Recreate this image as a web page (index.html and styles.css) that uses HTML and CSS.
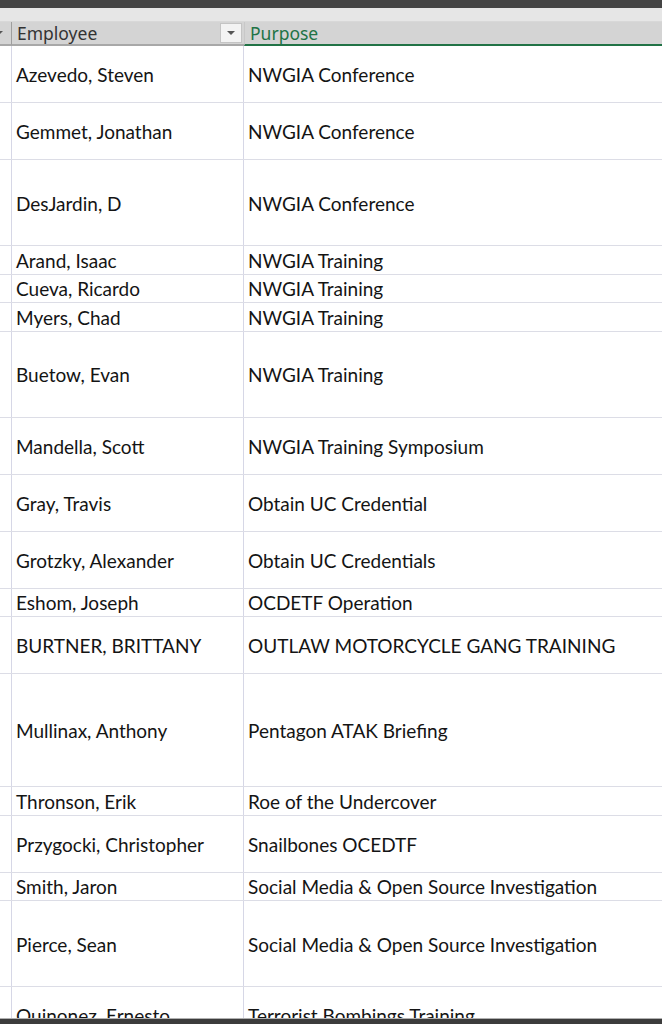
FILE: index.html
```html
<!DOCTYPE html>
<html>
<head>
<meta charset="utf-8">
<link rel="stylesheet" href="styles.css">
</head>
<body>
<div class="page">
  <div class="topbar"></div>
  <div class="strip"></div>
  <div class="header">
    <div class="hcell hcell-stub"><span class="tri tri-stub"></span></div>
    <div class="hcell hcell-emp">
      <span class="htext">Employee</span>
      <span class="dd"><span class="tri"></span></span>
    </div>
    <div class="hcell hcell-purpose"><span class="htext">Purpose</span></div>
  </div>
  <div class="table">
    <div class="row h2"><div class="stub"></div><div class="cell emp">Azevedo, Steven</div><div class="cell">NWGIA Conference</div></div>
    <div class="row h2"><div class="stub"></div><div class="cell emp">Gemmet, Jonathan</div><div class="cell">NWGIA Conference</div></div>
    <div class="row h3"><div class="stub"></div><div class="cell emp">DesJardin, D</div><div class="cell">NWGIA Conference</div></div>
    <div class="row h1"><div class="stub"></div><div class="cell emp">Arand, Isaac</div><div class="cell">NWGIA Training</div></div>
    <div class="row h1"><div class="stub"></div><div class="cell emp">Cueva, Ricardo</div><div class="cell">NWGIA Training</div></div>
    <div class="row h1"><div class="stub"></div><div class="cell emp">Myers, Chad</div><div class="cell">NWGIA Training</div></div>
    <div class="row h3"><div class="stub"></div><div class="cell emp">Buetow, Evan</div><div class="cell">NWGIA Training</div></div>
    <div class="row h2"><div class="stub"></div><div class="cell emp">Mandella, Scott</div><div class="cell">NWGIA Training Symposium</div></div>
    <div class="row h2"><div class="stub"></div><div class="cell emp">Gray, Travis</div><div class="cell">Obtain UC Credential</div></div>
    <div class="row h2"><div class="stub"></div><div class="cell emp">Grotzky, Alexander</div><div class="cell">Obtain UC Credentials</div></div>
    <div class="row h1"><div class="stub"></div><div class="cell emp">Eshom, Joseph</div><div class="cell">OCDETF Operation</div></div>
    <div class="row h2"><div class="stub"></div><div class="cell emp">BURTNER, BRITTANY</div><div class="cell">OUTLAW MOTORCYCLE GANG TRAINING</div></div>
    <div class="row h4"><div class="stub"></div><div class="cell emp">Mullinax, Anthony</div><div class="cell">Pentagon ATAK Briefing</div></div>
    <div class="row h1"><div class="stub"></div><div class="cell emp">Thronson, Erik</div><div class="cell">Roe of the Undercover</div></div>
    <div class="row h2"><div class="stub"></div><div class="cell emp">Przygocki, Christopher</div><div class="cell">Snailbones OCEDTF</div></div>
    <div class="row h1"><div class="stub"></div><div class="cell emp">Smith, Jaron</div><div class="cell">Social Media &amp; Open Source Investigation</div></div>
    <div class="row h3"><div class="stub"></div><div class="cell emp">Pierce, Sean</div><div class="cell">Social Media &amp; Open Source Investigation</div></div>
    <div class="row h2"><div class="stub"></div><div class="cell emp">Quinonez, Ernesto</div><div class="cell">Terrorist Bombings Training</div></div>
  </div>
  <div class="bottombar"></div>
</div>
</body>
</html>
```

FILE: styles.css
```css
html, body {
  margin: 0;
  padding: 0;
  background: #ffffff;
}

.page {
  width: 662px;
  height: 1024px;
  display: flex;
  flex-direction: column;
  overflow: hidden;
}

.topbar {
  height: 8px;
  background: #444444;
  flex: none;
}

.strip {
  height: 13px;
  background: #e6e6e6;
  border-bottom: 1px solid #d8d8d8;
  flex: none;
}

.header {
  height: 24px;
  flex: none;
  display: grid;
  grid-template-columns: 12px 232px 1fr;
  background: #d4d4d4;
  font-family: "Noto Sans", "Open Sans", sans-serif;
  font-size: 17.5px;
  color: #333333;
}

.hcell {
  position: relative;
  display: flex;
  align-items: center;
  border-bottom: 2px solid #a8a8a8;
  box-sizing: border-box;
}

.hcell-stub {
  border-right: 1px solid #9e9e9e;
  overflow: hidden;
}

.hcell-emp {
  padding-left: 5px;
  justify-content: space-between;
}

.hcell-purpose {
  padding-left: 5px;
  color: #217346;
  border-bottom-color: #217346;
  border-left: 1px solid #c8c8c8;
}

.htext {
  line-height: 22px;
}

.dd {
  width: 22px;
  height: 20px;
  margin-right: 2px;
  background: #f3f3f3;
  border: 1px solid #c4c4c4;
  box-sizing: border-box;
  display: flex;
  align-items: center;
  justify-content: center;
}

.tri {
  width: 0;
  height: 0;
  border-left: 4px solid transparent;
  border-right: 4px solid transparent;
  border-top: 4px solid #555555;
}

.tri-stub {
  margin-left: -5px;
}

.table {
  flex: 1;
  overflow: hidden;
  font-family: "Lato", "Open Sans", sans-serif;
  font-size: 19px;
  color: #141414;
}

.row {
  display: grid;
  grid-template-columns: 12px 232px 1fr;
  border-bottom: 1px solid #dcdde6;
  box-sizing: border-box;
}

.h1 { height: 28.5px; }
.h2 { height: 57px; }
.h3 { height: 86px; }
.h4 { height: 113px; }

.stub {
  border-right: 1px solid #d6d7e6;
}

.cell {
  display: flex;
  align-items: center;
  padding-left: 4px;
  padding-top: 1px;
  white-space: nowrap;
  overflow: hidden;
}

.emp {
  border-right: 1px solid #d6d7e6;
}

.bottombar {
  height: 5px;
  flex: none;
  background: #3c3c3c;
  border-top: 1px solid #b0b0b0;
}
```
